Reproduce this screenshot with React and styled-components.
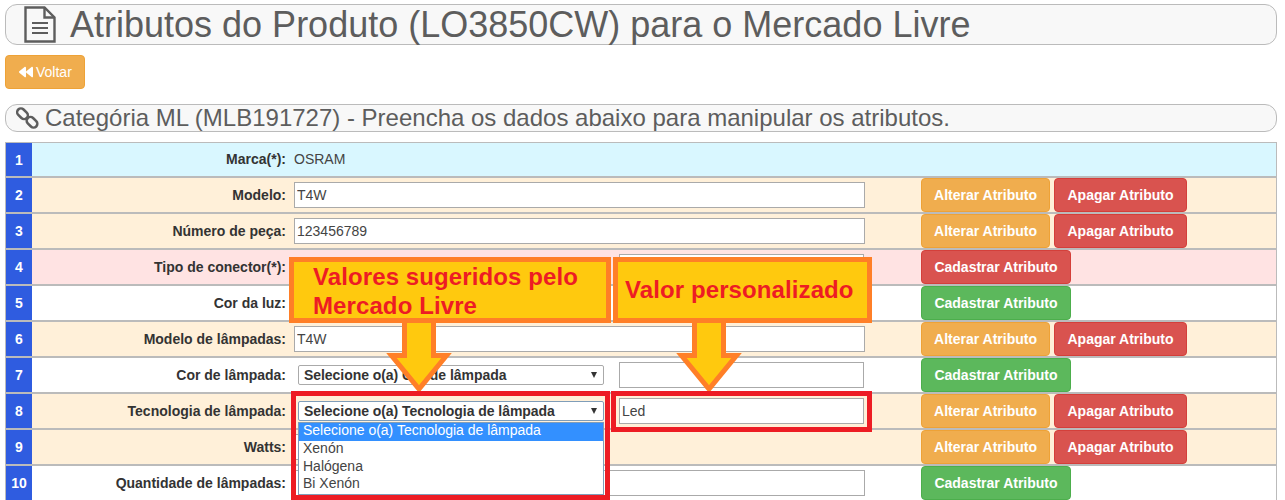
import React from 'react';
import styled, { createGlobalStyle } from 'styled-components';
import { FaBackward } from 'react-icons/fa';

const GlobalStyle = createGlobalStyle`
  html, body {
    margin: 0;
    height: 500px;
    overflow: hidden;
    background: #fff;
  }
  body {
    font-family: "Liberation Sans", Arial, sans-serif;
    font-size: 14px;
    color: #333;
  }
`;

const Page = styled.div`
  position: relative;
  height: 500px;
  padding: 4px 8px 0 5px;
  box-sizing: border-box;
  overflow: hidden;
`;

const PageTitle = styled.h1`
  display: flex;
  align-items: center;
  gap: 14px;
  height: 41px;
  margin: 0;
  padding-left: 18px;
  box-sizing: border-box;
  border: 1px solid #bbb;
  border-radius: 12px;
  background: #f8f8f8;
  color: #5d5d5d;
  font-size: 36px;
  font-weight: 400;
  white-space: nowrap;
`;

const BackButton = styled.button`
  display: flex;
  align-items: center;
  gap: 3px;
  width: 80px;
  height: 34px;
  margin: 10px 0 15px;
  padding: 0 0 0 13px;
  box-sizing: border-box;
  border: 1px solid #eea236;
  border-radius: 4px;
  background: #f0ad4e;
  color: #fff;
  font: 14px "Liberation Sans", Arial, sans-serif;
`;

const SectionTitle = styled.h3`
  display: flex;
  align-items: center;
  gap: 6px;
  height: 28px;
  margin: 0 0 10px;
  padding-left: 10px;
  box-sizing: border-box;
  border: 1px solid #bbb;
  border-radius: 12px;
  background: #f8f8f8;
  color: #5d5d5d;
  font-size: 24px;
  font-weight: 400;
  white-space: nowrap;
`;

const Table = styled.div`
  border: 1px solid #bbb;
  border-width: 1px 1px 0;
`;

const rowColors = {
  info: '#d9f7ff',
  warning: '#fff0d9',
  danger: '#ffe3e3',
  plain: '#fff',
};

const Row = styled.div`
  display: grid;
  grid-template-columns: 26px 254px 635px 1fr;
  align-items: center;
  height: ${(p) => (p.$first ? 35 : 36)}px;
  box-sizing: border-box;
  border-bottom: 2px solid #bbb;
  background: ${(p) => rowColors[p.$tone]};

  & > * + * {
    margin-bottom: ${(p) => (p.$first ? 1 : 0)}px;
  }
`;

const RowNumber = styled.div`
  display: flex;
  align-items: center;
  justify-content: center;
  height: 100%;
  background: #2f5ce0;
  color: #fff;
  font-weight: 700;
`;

const Label = styled.label`
  text-align: right;
  color: #333;
  font-weight: 700;
`;

const Field = styled.div`
  display: flex;
  align-items: center;
  padding-left: 8px;
`;

const StaticValue = styled.span`
  color: #444;
`;

const TextInput = styled.input`
  width: ${(p) => p.$width}px;
  height: 26px;
  margin-left: ${(p) => p.$offset || 0}px;
  padding: 0 2px;
  box-sizing: border-box;
  border: 1px solid #aaa;
  background: #fff;
  color: #444;
  font: 14px "Liberation Sans", Arial, sans-serif;
`;

const Select = styled.div`
  display: flex;
  align-items: center;
  justify-content: space-between;
  width: 306px;
  height: 20px;
  margin-left: 4px;
  padding: 0 6px 0 5px;
  box-sizing: border-box;
  border: 1px solid ${(p) => (p.$open ? '#7f9db9' : '#aaa')};
  border-radius: 2px;
  background: #fff;
  color: #333;
  font-weight: 700;
  letter-spacing: -0.05px;
  white-space: nowrap;

  &::after {
    content: '';
    border-left: 3.5px solid transparent;
    border-right: 3.5px solid transparent;
    border-top: 6px solid #333;
  }
`;

const Actions = styled.div`
  display: flex;
  gap: 4px;
`;

const buttonColors = {
  orange: ['#f0ad4e', '#eea236'],
  red: ['#d9534f', '#d43f3a'],
  green: ['#5cb85c', '#4cae4c'],
};

const ActionButton = styled.button`
  width: ${(p) => p.$width}px;
  height: 34px;
  padding: 0;
  box-sizing: border-box;
  border: 1px solid ${(p) => buttonColors[p.$color][1]};
  border-radius: 4px;
  background: ${(p) => buttonColors[p.$color][0]};
  color: #fff;
  font: 700 14px "Liberation Sans", Arial, sans-serif;
  white-space: nowrap;
`;

const Dropdown = styled.ul`
  position: absolute;
  left: 298px;
  top: 422px;
  width: 306px;
  height: 73px;
  margin: 0;
  padding: 0;
  box-sizing: border-box;
  border: 1px solid #7f9db9;
  background: #fff;
  list-style: none;
  color: #444;
`;

const DropdownOption = styled.li`
  height: ${(p) => (p.$selected ? 18 : 17.5)}px;
  padding-left: 4px;
  line-height: 15px;
  background: ${(p) => (p.$selected ? '#3390ff' : 'transparent')};
  color: ${(p) => (p.$selected ? '#fff' : 'inherit')};
`;

const Highlight = styled.div`
  position: absolute;
  left: ${(p) => p.$left}px;
  top: 391px;
  width: ${(p) => p.$width}px;
  height: ${(p) => p.$height}px;
  box-sizing: border-box;
  border: 5px solid #ed1c24;
  pointer-events: none;
`;

const Callout = styled.div`
  position: absolute;
  left: ${(p) => p.$left}px;
  top: 257px;
  width: ${(p) => p.$width}px;
  height: 66px;
  padding: ${(p) => p.$pad};
  box-sizing: border-box;
  border: 5px solid #ff7f27;
  background: #ffc90e;
  color: #ed1c24;
  font-size: 24px;
  font-weight: 700;
  letter-spacing: 0.1px;
  line-height: 29px;
  white-space: pre-line;
`;

const Arrow = styled.svg`
  position: absolute;
  left: ${(p) => p.$left}px;
  top: 318px;
  overflow: visible;
`;

const DownArrow = ({ left }) => (
  <Arrow $left={left} width="66" height="76" viewBox="0 0 66 76">
    <path
      d="M18.5 0V37.5H5.5L33 71L60.5 37.5H47.5V0"
      fill="#ffc90e"
      stroke="#ff7f27"
      strokeWidth="5"
    />
  </Arrow>
);

const FileIcon = () => (
  <svg width="32" height="37" viewBox="0 0 32 37" fill="none" stroke="#5d5d5d" strokeWidth="2.4">
    <path d="M1.5 1.5H20.5L30.5 11.5V35.5H1.5Z" />
    <path d="M20.5 1.5V11.5H30.5" />
    <path d="M8 17H24M8 22H24M8 27H24" strokeWidth="2" />
  </svg>
);

const ChainIcon = () => (
  <svg width="23" height="22" viewBox="0 0 23 22" fill="none" stroke="#5d5d5d" strokeWidth="2.5">
    <rect x="0.5" y="3" width="12" height="7.5" rx="3.75" transform="rotate(45 6.5 6.75)" />
    <rect x="10" y="11.5" width="12" height="7.5" rx="3.75" transform="rotate(45 16 15.25)" />
  </svg>
);

const FormRow = ({ n, tone, label, value, input, select, second, marker, buttons = [], first }) => (
  <Row $tone={tone} $first={first}>
    <RowNumber>{n}</RowNumber>
    <Label>{label}</Label>
    <Field>
      {value && <StaticValue>{value}</StaticValue>}
      {input !== undefined && <TextInput $width={571} defaultValue={input} />}
      {select && <Select $open={select.open}>{select.text}</Select>}
      {second !== undefined && <TextInput $width={245} $offset={15} defaultValue={second} />}
      {marker && <TextInput $width={30} defaultValue="" />}
    </Field>
    <Actions>
      {buttons.map(([text, color, width]) => (
        <ActionButton key={text} $color={color} $width={width}>{text}</ActionButton>
      ))}
    </Actions>
  </Row>
);

const editButtons = [['Alterar Atributo', 'orange', 129], ['Apagar Atributo', 'red', 133]];

const App = () => (
  <Page>
    <GlobalStyle />
    <PageTitle>
      <FileIcon />
      Atributos do Produto (LO3850CW) para o Mercado Livre
    </PageTitle>
    <BackButton><FaBackward size={14} />Voltar</BackButton>
    <SectionTitle>
      <ChainIcon />
      Categória ML (MLB191727) - Preencha os dados abaixo para manipular os atributos.
    </SectionTitle>
    <Table>
      <FormRow first n={1} tone="info" label="Marca(*):" value="OSRAM" />
      <FormRow n={2} tone="warning" label="Modelo:" input="T4W" buttons={editButtons} />
      <FormRow n={3} tone="warning" label="Número de peça:" input="123456789" buttons={editButtons} />
      {/* these two selects sit behind the callout, so their text never shows */}
      <FormRow n={4} tone="danger" label="Tipo de conector(*):" select={{ text: '' }} second="" buttons={[['Cadastrar Atributo', 'red', 150]]} />
      <FormRow n={5} tone="plain" label="Cor da luz:" select={{ text: '' }} second="" buttons={[['Cadastrar Atributo', 'green', 150]]} />
      <FormRow n={6} tone="warning" label="Modelo de lâmpadas:" input="T4W" buttons={editButtons} />
      <FormRow n={7} tone="plain" label="Cor de lâmpada:" select={{ text: 'Selecione o(a) Cor de lâmpada' }} second="" buttons={[['Cadastrar Atributo', 'green', 150]]} />
      <FormRow n={8} tone="warning" label="Tecnologia de lâmpada:" select={{ text: 'Selecione o(a) Tecnologia de lâmpada', open: true }} second="Led" buttons={editButtons} />
      <FormRow n={9} tone="warning" label="Watts:" marker buttons={editButtons} />
      <FormRow n={10} tone="plain" label="Quantidade de lâmpadas:" input="" buttons={[['Cadastrar Atributo', 'green', 150]]} />
    </Table>

    <DownArrow left={386} />
    <DownArrow left={676} />
    <Callout $left={289} $width={322} $pad="0 0 0 19px">{'Valores sugeridos pelo\nMercado Livre'}</Callout>
    <Callout $left={613} $width={259} $pad="13px 0 0 7px">Valor personalizado</Callout>
    <Dropdown>
      <DropdownOption $selected>Selecione o(a) Tecnologia de lâmpada</DropdownOption>
      <DropdownOption>Xenón</DropdownOption>
      <DropdownOption>Halógena</DropdownOption>
      <DropdownOption>Bi Xenón</DropdownOption>
    </Dropdown>
    <Highlight $left={291} $width={319} $height={109} />
    <Highlight $left={611} $width={261} $height={41} />
  </Page>
);

export default App;
